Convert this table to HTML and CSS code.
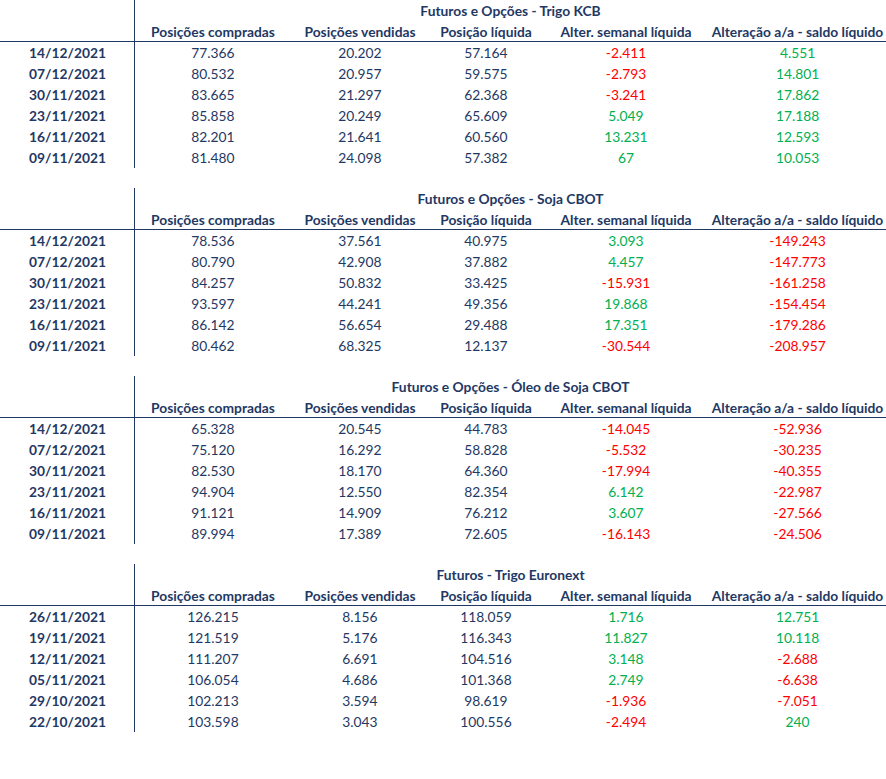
FILE: index.html
```html
<!DOCTYPE html>
<html lang="pt">
<head>
<meta charset="utf-8">
<title>Posições</title>
<link rel="stylesheet" href="styles.css">
</head>
<body>
<div class="sheet">

<table class="block">
<colgroup><col class="c0"><col class="c1"><col class="c2"><col class="c3"><col class="c4"><col class="c5"></colgroup>
<tr class="title"><td class="lab"></td><td colspan="5">Futuros e Opções - Trigo KCB</td></tr>
<tr class="head"><td class="lab"></td><td>Posições compradas</td><td>Posições vendidas</td><td>Posição líquida</td><td>Alter. semanal líquida</td><td>Alteração a/a - saldo líquido</td></tr>
<tr><td class="lab">14/12/2021</td><td>77.366</td><td>20.202</td><td>57.164</td><td class="neg">-2.411</td><td class="pos">4.551</td></tr>
<tr><td class="lab">07/12/2021</td><td>80.532</td><td>20.957</td><td>59.575</td><td class="neg">-2.793</td><td class="pos">14.801</td></tr>
<tr><td class="lab">30/11/2021</td><td>83.665</td><td>21.297</td><td>62.368</td><td class="neg">-3.241</td><td class="pos">17.862</td></tr>
<tr><td class="lab">23/11/2021</td><td>85.858</td><td>20.249</td><td>65.609</td><td class="pos">5.049</td><td class="pos">17.188</td></tr>
<tr><td class="lab">16/11/2021</td><td>82.201</td><td>21.641</td><td>60.560</td><td class="pos">13.231</td><td class="pos">12.593</td></tr>
<tr><td class="lab">09/11/2021</td><td>81.480</td><td>24.098</td><td>57.382</td><td class="pos">67</td><td class="pos">10.053</td></tr>
</table>

<table class="block">
<colgroup><col class="c0"><col class="c1"><col class="c2"><col class="c3"><col class="c4"><col class="c5"></colgroup>
<tr class="title"><td class="lab"></td><td colspan="5">Futuros e Opções - Soja CBOT</td></tr>
<tr class="head"><td class="lab"></td><td>Posições compradas</td><td>Posições vendidas</td><td>Posição líquida</td><td>Alter. semanal líquida</td><td>Alteração a/a - saldo líquido</td></tr>
<tr><td class="lab">14/12/2021</td><td>78.536</td><td>37.561</td><td>40.975</td><td class="pos">3.093</td><td class="neg">-149.243</td></tr>
<tr><td class="lab">07/12/2021</td><td>80.790</td><td>42.908</td><td>37.882</td><td class="pos">4.457</td><td class="neg">-147.773</td></tr>
<tr><td class="lab">30/11/2021</td><td>84.257</td><td>50.832</td><td>33.425</td><td class="neg">-15.931</td><td class="neg">-161.258</td></tr>
<tr><td class="lab">23/11/2021</td><td>93.597</td><td>44.241</td><td>49.356</td><td class="pos">19.868</td><td class="neg">-154.454</td></tr>
<tr><td class="lab">16/11/2021</td><td>86.142</td><td>56.654</td><td>29.488</td><td class="pos">17.351</td><td class="neg">-179.286</td></tr>
<tr><td class="lab">09/11/2021</td><td>80.462</td><td>68.325</td><td>12.137</td><td class="neg">-30.544</td><td class="neg">-208.957</td></tr>
</table>

<table class="block">
<colgroup><col class="c0"><col class="c1"><col class="c2"><col class="c3"><col class="c4"><col class="c5"></colgroup>
<tr class="title"><td class="lab"></td><td colspan="5">Futuros e Opções - Óleo de Soja CBOT</td></tr>
<tr class="head"><td class="lab"></td><td>Posições compradas</td><td>Posições vendidas</td><td>Posição líquida</td><td>Alter. semanal líquida</td><td>Alteração a/a - saldo líquido</td></tr>
<tr><td class="lab">14/12/2021</td><td>65.328</td><td>20.545</td><td>44.783</td><td class="neg">-14.045</td><td class="neg">-52.936</td></tr>
<tr><td class="lab">07/12/2021</td><td>75.120</td><td>16.292</td><td>58.828</td><td class="neg">-5.532</td><td class="neg">-30.235</td></tr>
<tr><td class="lab">30/11/2021</td><td>82.530</td><td>18.170</td><td>64.360</td><td class="neg">-17.994</td><td class="neg">-40.355</td></tr>
<tr><td class="lab">23/11/2021</td><td>94.904</td><td>12.550</td><td>82.354</td><td class="pos">6.142</td><td class="neg">-22.987</td></tr>
<tr><td class="lab">16/11/2021</td><td>91.121</td><td>14.909</td><td>76.212</td><td class="pos">3.607</td><td class="neg">-27.566</td></tr>
<tr><td class="lab">09/11/2021</td><td>89.994</td><td>17.389</td><td>72.605</td><td class="neg">-16.143</td><td class="neg">-24.506</td></tr>
</table>

<table class="block">
<colgroup><col class="c0"><col class="c1"><col class="c2"><col class="c3"><col class="c4"><col class="c5"></colgroup>
<tr class="title"><td class="lab"></td><td colspan="5">Futuros - Trigo Euronext</td></tr>
<tr class="head"><td class="lab"></td><td>Posições compradas</td><td>Posições vendidas</td><td>Posição líquida</td><td>Alter. semanal líquida</td><td>Alteração a/a - saldo líquido</td></tr>
<tr><td class="lab">26/11/2021</td><td>126.215</td><td>8.156</td><td>118.059</td><td class="pos">1.716</td><td class="pos">12.751</td></tr>
<tr><td class="lab">19/11/2021</td><td>121.519</td><td>5.176</td><td>116.343</td><td class="pos">11.827</td><td class="pos">10.118</td></tr>
<tr><td class="lab">12/11/2021</td><td>111.207</td><td>6.691</td><td>104.516</td><td class="pos">3.148</td><td class="neg">-2.688</td></tr>
<tr><td class="lab">05/11/2021</td><td>106.054</td><td>4.686</td><td>101.368</td><td class="pos">2.749</td><td class="neg">-6.638</td></tr>
<tr><td class="lab">29/10/2021</td><td>102.213</td><td>3.594</td><td>98.619</td><td class="neg">-1.936</td><td class="neg">-7.051</td></tr>
<tr><td class="lab">22/10/2021</td><td>103.598</td><td>3.043</td><td>100.556</td><td class="neg">-2.494</td><td class="pos">240</td></tr>
</table>

</div>
</body>
</html>
```

FILE: styles.css
```css
html, body {
  margin: 0;
  padding: 0;
  background: #ffffff;
}

.sheet {
  font-family: "Lato", "Liberation Sans", sans-serif;
  font-size: 13.8px;
  color: #1f3864;
}

.block {
  width: 886px;
  table-layout: fixed;
  border-collapse: separate;
  border-spacing: 0;
  margin: 0 0 20px 0;
}

.c0 { width: 135px; }
.c1 { width: 156px; }
.c2 { width: 138px; }
.c3 { width: 114px; }
.c4 { width: 166px; }
.c5 { width: 177px; }

.block td {
  height: 21px;
  padding: 0;
  border: 0;
  text-align: center;
  vertical-align: middle;
  white-space: nowrap;
  line-height: 21px;
}

.block td.lab {
  font-weight: 700;
  box-shadow: inset -1px 0 0 #1f3864;
}

.title td,
.head td {
  font-weight: 700;
}

.head td {
  box-shadow: inset 0 -1px 0 #1f3864;
}

.head td.lab {
  box-shadow: inset -1px 0 0 #1f3864, inset 0 -1px 0 #1f3864;
}

.neg { color: #ff0000; }
.pos { color: #00b050; }
```
